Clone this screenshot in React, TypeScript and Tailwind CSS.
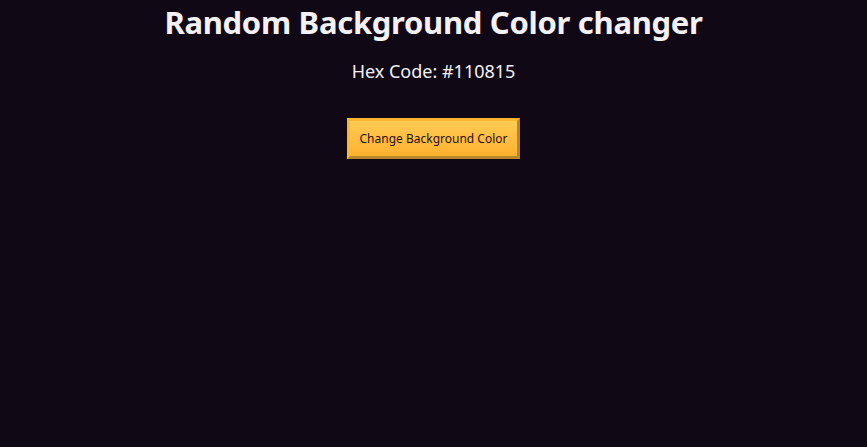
import React, { useState } from 'react'

const randomHex = () =>
    '#' + Math.floor(Math.random() * 0xffffff).toString(16).padStart(6, '0')

const App = () => {
    const [color, setColor] = useState('#110815')

    return (
        <div
            className="min-h-screen w-full flex flex-col items-center text-white font-['Noto_Sans',sans-serif]"
            style={{ backgroundColor: color }}
        >
            <h1 className="text-[31px] font-bold leading-[44px] text-[#f3f1f5] tracking-[-0.3px]">
                Random Background Color changer
            </h1>
            <p className="mt-[15px] text-[18px] leading-6 text-[#f3f1f5]">Hex Code: {color.toUpperCase()}</p>
            <button
                onClick={() => setColor(randomHex())}
                className="mt-[35px] w-[173px] h-[41px] text-[12px] text-[#2a0f14] bg-gradient-to-b from-[#ffcb52] to-[#ffb12f] border-[3px] border-t-[#ffb530] border-l-[#ffb530] border-r-[#b5862a] border-b-[#b5862a]"
            >
                Change Background Color
            </button>
        </div>
    )
}

export default App
